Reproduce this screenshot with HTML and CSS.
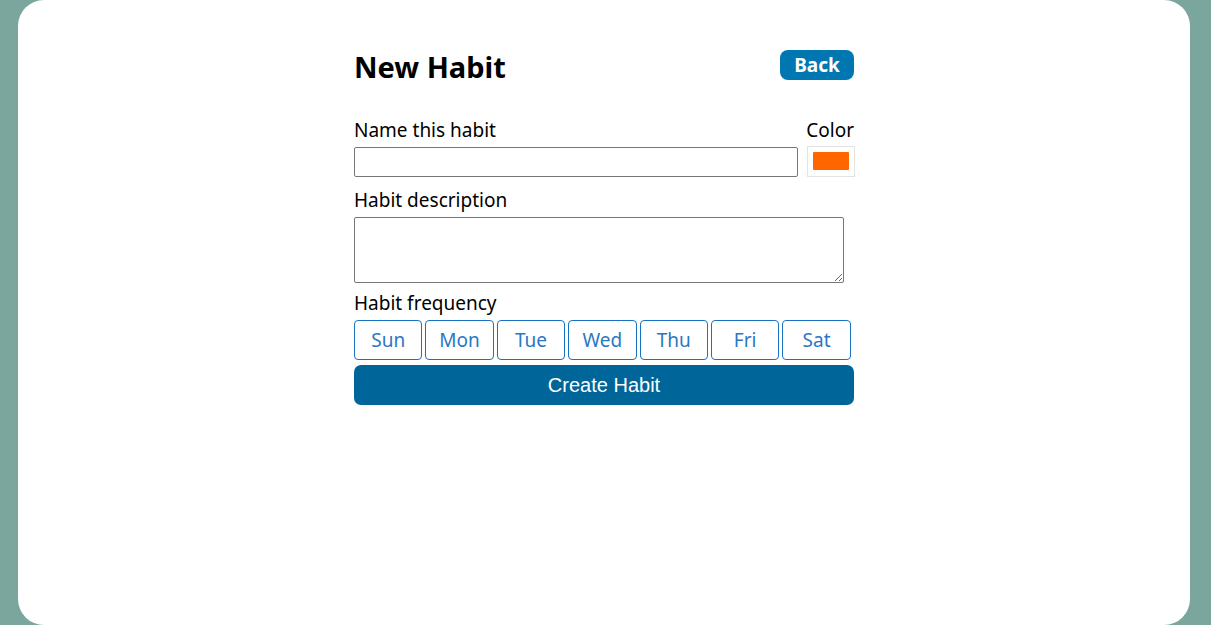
FILE: index.html
```html
<!DOCTYPE html>
<html>
<head>
<meta charset="utf-8">
<link rel="stylesheet" href="styles.css">
</head>
<body>
<div class="card">
  <div class="form">
    <div class="head">
      <h1 class="title">New Habit</h1>
      <button class="back">Back</button>
    </div>
    <div class="name-row">
      <div class="name-col">
        <label class="label">Name this habit</label>
        <input class="text-input" type="text">
      </div>
      <div class="color-col">
        <label class="label">Color</label>
        <div class="color-box"><div class="swatch"></div></div>
      </div>
    </div>
    <label class="label">Habit description</label>
    <textarea class="desc"></textarea>
    <label class="label">Habit frequency</label>
    <div class="days">
      <button class="day">Sun</button>
      <button class="day">Mon</button>
      <button class="day">Tue</button>
      <button class="day">Wed</button>
      <button class="day">Thu</button>
      <button class="day">Fri</button>
      <button class="day">Sat</button>
    </div>
    <button class="create">Create Habit</button>
  </div>
</div>
</body>
</html>
```
FILE: styles.css
```css
html, body {
  margin: 0;
  padding: 0;
  height: 100%;
}
body {
  background: #7ba69e;
  font-family: "Noto Sans", "Open Sans", sans-serif;
  color: #000;
}
.card {
  margin: 0 21px 0 18px;
  height: 625px;
  background: #fff;
  border-radius: 26px;
  display: flex;
  justify-content: center;
  box-sizing: border-box;
  padding-top: 50px;
}
.form {
  width: 500px;
  display: flex;
  flex-direction: column;
}
.head {
  display: flex;
  justify-content: space-between;
  align-items: flex-start;
  height: 30px;
  margin-bottom: 37px;
}
.title {
  margin: 0;
  font-size: 29px;
  line-height: 32px;
  font-weight: 700;
  margin-top: 1px;
}
.back {
  width: 74px;
  height: 30px;
  border: none;
  border-radius: 8px;
  background: #0077b0;
  color: #fff;
  font-family: "Noto Sans", "Open Sans", sans-serif;
  font-weight: 700;
  font-size: 19px;
  padding: 0;
  line-height: 30px;
}
.label {
  display: block;
  font-size: 19px;
  line-height: 26px;
  height: 26px;
  margin-bottom: 4px;
}
.name-row {
  display: flex;
  justify-content: space-between;
  margin-bottom: 10px;
}
.name-col {
  display: flex;
  flex-direction: column;
}
.color-col {
  display: flex;
  flex-direction: column;
  align-items: flex-end;
}
.color-col .label {
  margin-bottom: 3px;
}
.text-input {
  width: 444px;
  height: 30px;
  box-sizing: border-box;
  border: 1px solid #767676;
  border-radius: 2px;
  margin: 0;
  padding: 0 4px;
}
.color-box {
  width: 48px;
  height: 31px;
  box-sizing: border-box;
  border: 1px solid #e3e3e3;
  background: #fff;
  padding: 5px;
  margin-right: -1px;
  display: flex;
  justify-content: center;
}
.swatch {
  width: 36px;
  height: 18px;
  background: #ff6600;
  border-radius: 1px;
}
.desc {
  width: 490px;
  height: 66px;
  box-sizing: border-box;
  border: 1px solid #767676;
  border-radius: 2px;
  margin: 0 0 7px 0;
  resize: vertical;
}
.days {
  display: flex;
  gap: 3px;
  margin-bottom: 5px;
}
.day {
  width: 68.4px;
  height: 40px;
  box-sizing: border-box;
  border: 1px solid #1a73c0;
  border-radius: 4px;
  background: #fff;
  color: #2a77c4;
  font-family: "Noto Sans", "Open Sans", sans-serif;
  font-size: 19px;
  padding: 0;
}
.create {
  width: 500px;
  height: 40px;
  border: none;
  border-radius: 7px;
  background: #006699;
  color: #fff;
  font-family: "Liberation Sans", Arial, sans-serif;
  font-size: 20px;
  padding: 0;
}
```
